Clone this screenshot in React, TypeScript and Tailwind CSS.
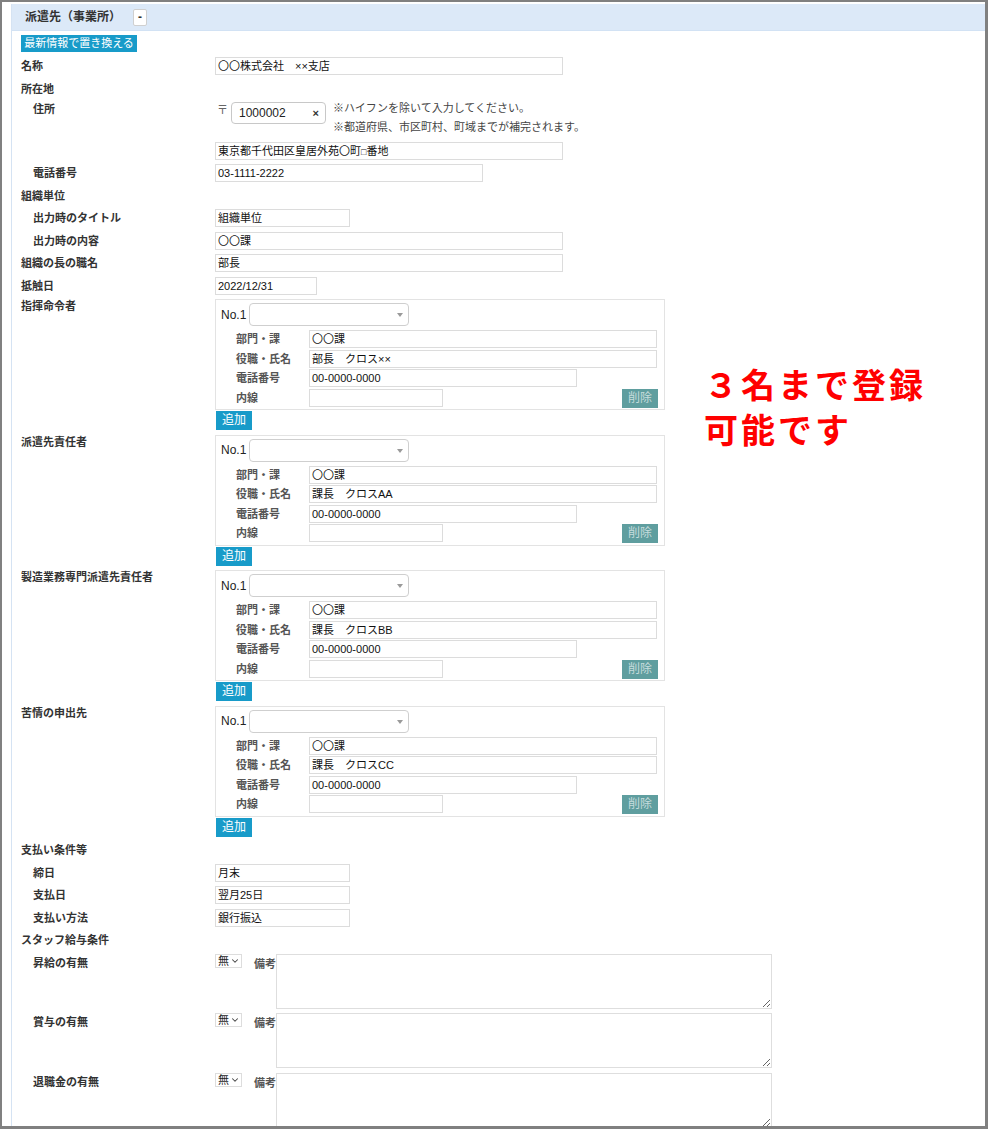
import { ChevronDown } from "lucide-react";

const font = "font-['Liberation_Sans','Noto_Sans_CJK_JP',sans-serif]";

function TextBox({ value = "", className = "" }: { value?: React.ReactNode; className?: string }) {
  return (
    <div
      className={`h-[18px] shrink-0 overflow-hidden whitespace-nowrap border border-[#dcdcdc] bg-white pl-[2px] text-[11px] leading-[16px] text-[#111] ${className}`}
    >
      {value}
    </div>
  );
}

function Label({ text, sub, className = "" }: { text: string; sub?: boolean; className?: string }) {
  return (
    <div
      className={`w-[194px] shrink-0 text-[11px] font-semibold leading-[18px] text-[#333] ${sub ? "pl-[12px]" : ""} ${className}`}
    >
      {text}
    </div>
  );
}

function Row({ label, sub, children }: { label: string; sub?: boolean; children?: React.ReactNode }) {
  return (
    <div className="flex items-start">
      <Label text={label} sub={sub} />
      {children ?? <div className="h-[18px]" />}
    </div>
  );
}

interface Person {
  title: string;
  dept: string;
  name: string;
  tel: string;
}

function PersonBox({ person }: { person: Person }) {
  const fields = [
    { label: "部門・課", value: person.dept, w: "w-[348px]" },
    { label: "役職・氏名", value: person.name, w: "w-[348px]" },
    { label: "電話番号", value: person.tel, w: "w-[268px]" },
  ];
  return (
    <div className="flex items-start">
      <Label text={person.title} className="-mt-[2px]" />
      <div>
        <div className="h-[111px] w-[450px] border border-[#e3e3e3] pl-[5px] pr-[7px] pt-[3px]">
          <div className="flex items-center">
            <span className="w-[28px] text-[12px] text-[#222]">No.1</span>
            <div className="relative h-[23px] w-[160px] rounded-[4px] border border-[#cfcfcf] bg-white">
              <svg className="absolute right-[5px] top-[9px]" width="6" height="4" viewBox="0 0 6 4">
                <path d="M0 0h6L3 4z" fill="#9a9a9a" />
              </svg>
            </div>
          </div>
          <div className="mt-[4px] flex flex-col gap-[1.5px] pl-[15px]">
            {fields.map((f) => (
              <div key={f.label} className="flex items-start">
                <span className="w-[73px] shrink-0 text-[11px] font-semibold leading-[18px] text-[#555]">{f.label}</span>
                <TextBox value={f.value} className={f.w} />
              </div>
            ))}
            <div className="flex items-start">
              <span className="w-[73px] shrink-0 text-[11px] font-semibold leading-[18px] text-[#555]">内線</span>
              <TextBox className="w-[134px]" />
              <div className="-mr-[1px] ml-auto h-[19px] w-[36px] bg-[#5f9e9f] text-center text-[12px] leading-[19px] text-[#c6dcdc]">
                削除
              </div>
            </div>
          </div>
        </div>
        <div className="ml-[1px] mt-[1px] h-[19px] w-[36px] bg-[#189bc9] text-center text-[12px] leading-[19px] text-white">
          追加
        </div>
      </div>
    </div>
  );
}

function MemoRow({ label }: { label: string }) {
  return (
    <div className="flex items-start">
      <Label text={label} sub />
      <div className="flex items-start">
        <div className="flex h-[14px] w-[27px] items-center justify-between border border-[#dddddd] pl-[2px] pr-[1px] text-[11px] leading-[12px] text-[#222]">
          <span>無</span>
          <ChevronDown size={10} strokeWidth={2.5} className="text-[#444]" />
        </div>
        <span className="ml-[12px] mt-[3px] w-[22px] text-[11px] font-semibold leading-[14px] text-[#555]">備考</span>
        <textarea readOnly className="h-[55px] w-[496px] border border-[#dedede] bg-white" />
      </div>
    </div>
  );
}

const people: Person[] = [
  { title: "指揮命令者", dept: "〇〇課", name: "部長　クロス××", tel: "00-0000-0000" },
  { title: "派遣先責任者", dept: "〇〇課", name: "課長　クロスAA", tel: "00-0000-0000" },
  { title: "製造業務専門派遣先責任者", dept: "〇〇課", name: "課長　クロスBB", tel: "00-0000-0000" },
  { title: "苦情の申出先", dept: "〇〇課", name: "課長　クロスCC", tel: "00-0000-0000" },
];

export default function App() {
  return (
    <div
      className={`relative h-[1129px] w-[988px] overflow-hidden border-2 border-b-[3px] border-r-[3px] border-[#808080] bg-white ${font}`}
    >
      <div className="ml-[9px] mt-[2px] h-full border-l border-[#d5e3f3]">
        <div className="flex h-[27px] items-center border-b border-[#d2e2f4] bg-[#dce9f8] pl-[13px]">
          <span className="text-[12px] font-bold text-[#333]">派遣先（事業所）</span>
          <span className="ml-[12px] h-[17px] w-[14px] rounded-[2px] border border-[#d0d0d0] bg-white text-center text-[12px] font-bold leading-[14px] text-[#333]">
            -
          </span>
        </div>

        <div className="pl-[9px] pt-[4px]">
          <div className="h-[17px] w-[116px] bg-[#189bc9] text-center text-[11px] leading-[17px] text-white">
            最新情報で置き換える
          </div>

          <div className="mt-[5px] flex flex-col gap-[4.5px]">
            <Row label="名称">
              <TextBox value="〇〇株式会社　××支店" className="w-[348px]" />
            </Row>
            <Row label="所在地" />
            <div className="flex h-[35px] items-start">
              <Label text="住所" sub className="-mt-[2px]" />
              <span className="mt-[1px] w-[16px] pl-[2px] text-[11px] leading-[14px] text-[#666]">〒</span>
              <div className="flex h-[22px] w-[95px] items-center justify-between rounded-[4px] border border-[#c8c8c8] pl-[7px] pr-[6px] text-[12px] text-[#222]">
                <span>1000002</span>
                <span className="text-[11px] font-bold text-[#333]">×</span>
              </div>
              <div className="-mt-[3px] ml-[7px] text-[11px] leading-[19px] text-[#444]">
                <div>※ハイフンを除いて入力してください。</div>
                <div>※都道府県、市区町村、町域までが補完されます。</div>
              </div>
            </div>
            <Row label="">
              <TextBox
                value={
                  <>
                    東京都千代田区皇居外苑〇町<span className="text-[9px]">□</span>番地
                  </>
                }
                className="w-[348px]"
              />
            </Row>
            <Row label="電話番号" sub>
              <TextBox value="03-1111-2222" className="w-[268px]" />
            </Row>
            <Row label="組織単位" />
            <Row label="出力時のタイトル" sub>
              <TextBox value="組織単位" className="w-[135px]" />
            </Row>
            <Row label="出力時の内容" sub>
              <TextBox value="〇〇課" className="w-[348px]" />
            </Row>
            <Row label="組織の長の職名">
              <TextBox value="部長" className="w-[348px]" />
            </Row>
            <Row label="抵触日">
              <TextBox value="2022/12/31" className="w-[102px]" />
            </Row>

            {people.map((p) => (
              <PersonBox key={p.title} person={p} />
            ))}

            <Row label="支払い条件等" />
            <Row label="締日" sub>
              <TextBox value="月末" className="w-[135px]" />
            </Row>
            <Row label="支払日" sub>
              <TextBox value="翌月25日" className="w-[135px]" />
            </Row>
            <Row label="支払い方法" sub>
              <TextBox value="銀行振込" className="w-[135px]" />
            </Row>
            <Row label="スタッフ給与条件" />
            <MemoRow label="昇給の有無" />
            <MemoRow label="賞与の有無" />
            <MemoRow label="退職金の有無" />
          </div>
        </div>
      </div>

      <div className="absolute left-[702px] top-[362px] text-[34px] font-bold leading-[45px] tracking-[3px] text-[#ff0000]">
        <div>３名まで登録</div>
        <div>可能です</div>
      </div>
    </div>
  );
}
